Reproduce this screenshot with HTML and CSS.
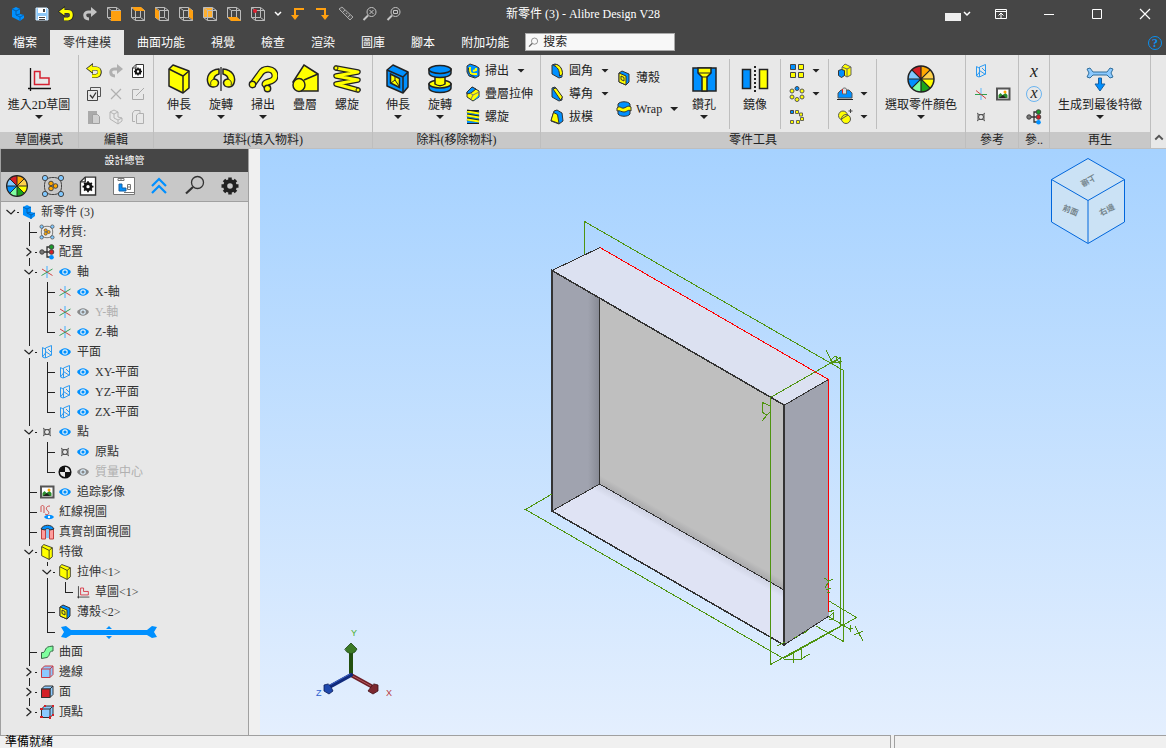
FILE: index.html
```html
<!DOCTYPE html>
<html lang="zh-TW">
<head>
    <meta charset="UTF-8">
    <meta name="viewport" content="width=device-width, initial-scale=1.0">
    <title>新零件 (3) - Alibre Design V28</title>
    <link rel="stylesheet" href="styles.css">
</head>
<body>
    <!-- icon sprite -->
    <svg class="sprite" aria-hidden="true">
        <symbol id="i-part" viewBox="0 0 16 16"><path d="M2 3l4-2 4 2v5l4 1v3l-4 3-8-4z" fill="#0090ff"/><path d="M2 3l4 2 4-2M6 5v4l4 2 4-2M10 11v4M6 9l4-1" fill="none" stroke="#0560b0"/></symbol>
        <symbol id="i-save" viewBox="0 0 16 16"><path d="M2 2h11l1 1v11H2z" fill="#8cc8f8" stroke="#d4ecff"/><path d="M4 2h8v5H4zM4 10h8v4H4z" fill="#fff"/><path d="M9 3h2v3H9zM5 11h6v1H5zM5 13h6v1H5z" fill="#444"/></symbol>
        <symbol id="i-undo" viewBox="0 0 16 16"><path d="M5 5.500h5c5 0 5 7 0 7.500H6" fill="none" stroke="#222" stroke-width="4"/><path d="M7 0L0 5.500 7 11z" fill="#222"/><path d="M4 5.500h6c4.500 0 4.500 7 0 7.500H6" fill="none" stroke="#ff0" stroke-width="2.800"/><path d="M6.500 1.500L1 5.500l5.500 4z" fill="#ff0"/></symbol>
        <symbol id="i-redo" viewBox="0 0 16 16"><path d="M12 6H6c-4.500 0-4.500 7 1 7" fill="none" stroke="currentColor" stroke-width="3"/><path d="M9 1l6 5-6 5z" fill="currentColor"/></symbol>
        <symbol id="i-wire" viewBox="0 0 16 16"><path d="M1.500 1.500h9l4 3v10h-9l-4-3zM1.500 1.500l4 3h9M5.500 4.500v10M10.500 1.500v10h-9M10.500 11.500l4 3" fill="none" stroke="#bbb"/></symbol>
        <symbol id="i-v1" viewBox="0 0 16 16"><use href="#i-wire"/><path d="M5 5h10v10H5z" fill="#ffa010"/></symbol>
        <symbol id="i-v2" viewBox="0 0 16 16"><use href="#i-wire"/><path d="M2 1h9l4 4H5z" fill="#ffa010"/></symbol>
        <symbol id="i-v3" viewBox="0 0 16 16"><use href="#i-wire"/><path d="M1 2l4 3v9l-4-3z" fill="#ffa010"/></symbol>
        <symbol id="i-v4" viewBox="0 0 16 16"><use href="#i-wire"/><path d="M11 2l4 3v9l-4-3z" fill="#ffa010"/></symbol>
        <symbol id="i-v5" viewBox="0 0 16 16"><path d="M2 2h9v9H2z" fill="#ffb030"/><use href="#i-wire"/></symbol>
        <symbol id="i-v6" viewBox="0 0 16 16"><use href="#i-wire"/><path d="M2 11h9l4 4H5z" fill="#ffa010"/></symbol>
        <symbol id="i-v7" viewBox="0 0 16 16"><use href="#i-wire"/><circle cx="5" cy="5" r="2" fill="#e02030"/></symbol>
        <symbol id="i-chev" viewBox="0 0 8 8"><path d="M1 2l3 3 3-3" fill="none" stroke="currentColor" stroke-width="1.500"/></symbol>
        <symbol id="i-turnl" viewBox="0 0 16 16"><path d="M14 3H5v7" fill="none" stroke="#ffa010" stroke-width="2"/><path d="M1 9h8l-4 5z" fill="#ffa010"/></symbol>
        <symbol id="i-turnr" viewBox="0 0 16 16"><path d="M2 3h9v7" fill="none" stroke="#ffa010" stroke-width="2"/><path d="M7 9h8l-4 5z" fill="#ffa010"/></symbol>
        <symbol id="i-ruler" viewBox="0 0 16 16"><path d="M1 3l3-2 11 10-3 3z" fill="#555" stroke="#aaa"/><path d="M5 6l2-2M8 8l1-1M10 11l2-2" stroke="#aaa"/></symbol>
        <symbol id="i-lens" viewBox="0 0 16 16"><circle cx="9.500" cy="6" r="4.500" fill="none" stroke="currentColor"/><path d="M6 9.500L1.500 14" stroke="currentColor" stroke-width="2"/></symbol>
        <symbol id="i-lensx" viewBox="0 0 16 16"><use href="#i-lens"/><path d="M7.500 4l4 4M11.500 4l-4 4" stroke="currentColor"/></symbol>
        <symbol id="i-lensb" viewBox="0 0 16 16"><use href="#i-lens"/><path d="M7.500 4.500h4v3h-4z" fill="none" stroke="currentColor"/></symbol>
        <symbol id="i-keyin" viewBox="0 0 16 16"><path d="M2.500 3.500h11v9h-11zM2.500 5.500h11M8 12V7.500M5.500 9.500L8 7l2.500 2.500" fill="none" stroke="#fff"/></symbol>
        <symbol id="i-min" viewBox="0 0 12 12"><path d="M1 6.500h10" stroke="#fff"/></symbol>
        <symbol id="i-max" viewBox="0 0 12 12"><path d="M1.500 1.500h9v9h-9z" fill="none" stroke="#fff"/></symbol>
        <symbol id="i-x" viewBox="0 0 12 12"><path d="M1 1l10 10M11 1L1 11" stroke="currentColor" stroke-width="1.200"/></symbol>
        <symbol id="i-docgear" viewBox="0 0 16 16"><path d="M6 1.500h7.500v13h-11V5z" fill="#fff" stroke="#333"/><path d="M2.500 5H6V1.500" fill="none" stroke="#333"/><circle cx="8" cy="8.500" r="2.200" fill="none" stroke="#111" stroke-width="2"/><path d="M8 4.500v2M8 10.500v2M4 8.500h2M10 8.500h2M5.200 5.700l1 1M9.800 10.300l1 1M10.800 5.700l-1 1M5.200 11.300l1-1" stroke="#111" stroke-width="1.300"/></symbol>
        <symbol id="i-checks" viewBox="0 0 16 16"><path d="M4.500 4V1.500h10v9H12" fill="none" stroke="#555"/><path d="M1.500 4.500h10v10h-10z" fill="#e8e8e8" stroke="#444"/><path d="M4 9l2.500 3L10 6.500" fill="none" stroke="#333" stroke-width="1.300"/></symbol>
        <symbol id="i-editbox" viewBox="0 0 16 16"><path d="M9 3.500H2.500v10h11V8M6 10l8-8" fill="none" stroke="#aaa"/></symbol>
        <symbol id="i-paste" viewBox="0 0 16 16"><path d="M2 2h9v13H2z" fill="#aaa"/><path d="M6.500 5.500h5l2 2v7h-7z" fill="#d0d0d0" stroke="#a0a0a0"/></symbol>
        <symbol id="i-partoff" viewBox="0 0 16 16"><path d="M2 3l4-2 4 2v5l4 1v3l-4 3-8-5zM2 3l4 2 4-2M6 5v4l4 2 4-2M10 11v4" fill="none" stroke="#b4b4b4"/></symbol>
        <symbol id="i-copy" viewBox="0 0 16 16"><path d="M5 12.500H2.500V4l2-2.500H10V4M6.500 6l2-1.500h5v10h-7z" fill="none" stroke="#b0b0b0"/></symbol>

        <symbol id="b-sketch" viewBox="0 0 30 30"><path d="M6.500 4v23M4 24.500h23" stroke="#111" stroke-width="1.300"/><path d="M10.500 7.500H16v6.500h9v6.500H10.500z" fill="none" stroke="#d42030" stroke-width="1.500"/></symbol>
        <symbol id="b-extrude" viewBox="0 0 30 30"><path d="M5 5l4-4 16 6v17l-6 5-14-7z" fill="#ff0" stroke="#222" stroke-width="1.500" stroke-linejoin="round"/><path d="M5 5l14 7 6-5M19 12v17" fill="none" stroke="#222" stroke-width="1.500"/></symbol>
        <symbol id="b-revolve" viewBox="0 0 30 30"><path d="M13 5C3 6 0 13 2 19c1 4 6 5 9 3 3-3 1-7-3-7 0-3 2-4 5-5zM17 5c10 1 13 8 11 14-1 4-6 5-9 3-3-3-1-7 3-7 0-3-2-4-5-5z" fill="#ff0" stroke="#222" stroke-width="1.500" stroke-linejoin="round"/><path d="M8 15c-3 1-4 4-3 6M22 15c3 1 4 4 3 6" fill="none" stroke="#222"/><path d="M15 3v24" stroke="#444" stroke-width="1.500"/></symbol>
        <symbol id="b-sweep" viewBox="0 0 30 30"><path d="M4 21l8-11c4-7 15-6 15 2 0 7-10 5-10 8l3 4" fill="none" stroke="#222" stroke-width="7"/><path d="M4 21l8-11c4-7 15-6 15 2 0 7-10 5-10 8l3 4" fill="none" stroke="#ff0" stroke-width="4.500"/><circle cx="4.500" cy="20.500" r="3.200" fill="#ff0" stroke="#222" stroke-width="1.400"/><circle cx="19.500" cy="24.500" r="3.200" fill="#ff0" stroke="#222" stroke-width="1.400"/></symbol>
        <symbol id="b-loft" viewBox="0 0 30 30"><path d="M3 18L14 1l14 9v17H9z" fill="#ff0" stroke="#222" stroke-width="1.500"/><path d="M14 16L28 10" stroke="#222" stroke-width="1.500"/><ellipse cx="9" cy="21" rx="6" ry="6.500" fill="#ff0" stroke="#222" stroke-width="1.500"/></symbol>
        <symbol id="b-helix" viewBox="0 0 30 30"><path d="M4 4l22 4L4 12l22 4-22 4 22 6" fill="none" stroke="#222" stroke-width="5.500" stroke-linejoin="round" stroke-linecap="round"/><path d="M4 4l22 4L4 12l22 4-22 4 22 6" fill="none" stroke="#ff0" stroke-width="3" stroke-linejoin="round" stroke-linecap="round"/><circle cx="4" cy="4" r="2" fill="#ff0" stroke="#222"/><circle cx="26" cy="26" r="2" fill="#ff0" stroke="#222"/></symbol>
        <symbol id="b-cutext" viewBox="0 0 30 30"><path d="M4 6l6-5 15 7v15l-5 6-16-7z" fill="#0090ff" stroke="#222" stroke-width="1.500" stroke-linejoin="round"/><path d="M4 6l16 7v16M20 13l5-5" fill="none" stroke="#222" stroke-width="1.500"/><path d="M7.500 10l9 4.500v9l-9-4.500z" fill="#ff0" stroke="#222" stroke-width="1.500"/><path d="M8 19l4-3 4 6M12 16v-4" fill="none" stroke="#222"/></symbol>
        <symbol id="b-cutrev" viewBox="0 0 30 30"><path d="M4 20v4c0 6 22 6 22 0v-4z" fill="#0090ff" stroke="#222" stroke-width="1.500"/><ellipse cx="15" cy="20" rx="11" ry="4" fill="#ff0" stroke="#222" stroke-width="1.500"/><path d="M10 10h10v10c-3 2-7 2-10 0z" fill="#ff0" stroke="#222" stroke-width="1.500"/><path d="M4 5v4c0 6 22 6 22 0V5z" fill="#0090ff" stroke="#222" stroke-width="1.500"/><ellipse cx="15" cy="5.500" rx="11" ry="4" fill="#0090ff" stroke="#222" stroke-width="1.500"/></symbol>
        <symbol id="b-hole" viewBox="0 0 30 30"><path d="M4 4h23v23H4z" fill="#0090ff" stroke="#222" stroke-width="1.500"/><path d="M9 4h13v5l-4 4v14h-5V13L9 9z" fill="#ff0" stroke="#222" stroke-width="1.500"/><path d="M9 9h13M13 13h5" stroke="#222"/></symbol>
        <symbol id="b-mirror" viewBox="0 0 30 30"><path d="M2.500 5.500h8v19h-8z" fill="#0090ff" stroke="#222" stroke-width="1.500"/><path d="M19.500 5.500h8v19h-8z" fill="#ff0" stroke="#222" stroke-width="1.500"/><path d="M15 2v26" stroke="#222" stroke-width="2" stroke-dasharray="2 2"/></symbol>
        <symbol id="b-wheel" viewBox="0 0 30 30"><path d="M15 15V2A13 13 0 0 1 24.200 5.800z" fill="#ffa800"/><path d="M15 15L24.200 5.800A13 13 0 0 1 28 15z" fill="#ffd24d"/><path d="M15 15H28A13 13 0 0 1 24.200 24.200z" fill="#ff0"/><path d="M15 15L24.200 24.200A13 13 0 0 1 15 28z" fill="#1aa51a"/><path d="M15 15V28A13 13 0 0 1 5.800 24.200z" fill="#7fff9f"/><path d="M15 15L5.800 24.200A13 13 0 0 1 2 15z" fill="#0090ff"/><path d="M15 15H2A13 13 0 0 1 5.800 5.800z" fill="#80c8ff"/><path d="M15 15L5.800 5.800A13 13 0 0 1 15 2z" fill="#d42027"/><path d="M15 2v26M2 15h26M5.800 5.800l18.400 18.400M24.200 5.800L5.800 24.200" stroke="#222" stroke-width="1.200"/><circle cx="15" cy="15" r="13" fill="none" stroke="#222" stroke-width="1.500"/></symbol>
        <symbol id="b-regen" viewBox="0 0 30 30"><path d="M2 5l3-1 3 4h14l3-4 3 1-2 4 2 4-3 1-3-3H8l-3 3-3-1 2-4z" fill="#8ccaff" stroke="#2f6e9c"/><path d="M13.500 14h3v6h3.500l-5 7-5-7h3.500z" fill="#0090ff" stroke="#1a60a0"/></symbol>

        <symbol id="s-cutsweep" viewBox="0 0 16 16"><path d="M2 3l3-2 6 2 3 2v8l-4 2-6-2-2-4z" fill="#0090ff" stroke="#333"/><path d="M5 4c-1 8 2 7 7 7M8 8l3-1V5" fill="none" stroke="#ff0" stroke-width="2"/><path d="M3.500 5c0 7 2 7 6 8.500" fill="none" stroke="#333"/></symbol>
        <symbol id="s-cutloft" viewBox="0 0 16 16"><path d="M2 6l5-5 7 4v6l-6 4-6-4z" fill="#ff0" stroke="#333"/><path d="M2 6l5-5 4 2-5 4-4 1z" fill="#0090ff" stroke="#333"/><path d="M6 13l2-4 6-3M8 9L5 7" fill="none" stroke="#777"/><path d="M8 15l6-4V9z" fill="#0090ff"/></symbol>
        <symbol id="s-cuthelix" viewBox="0 0 16 16"><path d="M2 2h12v12H2z" fill="#0090ff"/><path d="M2 2l12 2M2 6l12 2M2 10l12 2" stroke="#222" stroke-width="3"/><path d="M2 2.500l12 2M2 6.500l12 2M2 10.500l12 2" stroke="#ff0" stroke-width="1.800"/><path d="M2 14.500h12M2 1.500h12" stroke="#222"/></symbol>
        <symbol id="s-fillet" viewBox="0 0 16 16"><path d="M3 2l3-1c5 1 7 5 7 9v4l-3 1-7-4z" fill="#0090ff" stroke="#333"/><path d="M4.500 2.500l3-1c4 1 6 5 6 10l-3 1.500c0-6-2-9-6-10.500z" fill="#ff0" stroke="#333"/></symbol>
        <symbol id="s-chamfer" viewBox="0 0 16 16"><path d="M3 2l3-1 7 10v3l-3 1-7-4z" fill="#0090ff" stroke="#333"/><path d="M4 3l3-1 6.500 9-2 3z" fill="#ff0" stroke="#333"/></symbol>
        <symbol id="s-draft" viewBox="0 0 16 16"><path d="M5 2l3-1 5 3 1 8-4 3-8-3z" fill="#0090ff" stroke="#333"/><path d="M4.500 3.500l4 2 1.500 9-8-3z" fill="#ff0" stroke="#333"/></symbol>
        <symbol id="s-shell" viewBox="0 0 16 16"><path d="M3 3l3-2 7 3v8l-3 3-7-3z" fill="#0090ff" stroke="#333"/><path d="M3 3l7 3v9l-7-3z" fill="#ff0" stroke="#333"/><path d="M5 6l3 1.500V11L5 9.500z" fill="#ff0" stroke="#333"/></symbol>
        <symbol id="s-wrap" viewBox="0 0 16 16"><path d="M2 3c2-3 10-3 12 0v10c-2 3-10 3-12 0z" fill="#0090ff" stroke="#333"/><path d="M1 7c3-3 4 1 7 0s4-3 7-1v4c-3-2-4 1-7 1s-4-2-7-1z" fill="#ff0" stroke="#333"/></symbol>
        <symbol id="s-pat1" viewBox="0 0 16 16"><path d="M1.500 1.500h5v5h-5z" fill="#0090ff" stroke="#444"/><path d="M9.500 1.500h5v5h-5zM1.500 9.500h5v5h-5zM9.500 9.500h5v5h-5z" fill="#ff0" stroke="#444"/></symbol>
        <symbol id="s-pat2" viewBox="0 0 16 16"><g fill="#ff0" stroke="#555"><circle cx="3" cy="5" r="2"/><circle cx="13" cy="5" r="2"/><circle cx="3" cy="11" r="2"/><circle cx="13" cy="11" r="2"/><circle cx="8" cy="13.500" r="2"/></g><circle cx="8" cy="2.500" r="2" fill="#0090ff" stroke="#444"/></symbol>
        <symbol id="s-pat3" viewBox="0 0 16 16"><path d="M1.500 1.500h3v3h-3z" fill="#0090ff" stroke="#444"/><path d="M6.500 1.500h3v3h-3zM10.500 4h3v3h-3zM11.500 8.500h3v3h-3zM7.500 11.500h3v3h-3zM1.500 11.500h3v3h-3z" fill="#ff0" stroke="#665"/></symbol>
        <symbol id="s-boss" viewBox="0 0 16 16"><path d="M5 4l3-3 6 3v8l-4 2-5-3z" fill="#ff0" stroke="#666"/><path d="M5 4l5 2v8M10 6l4-2" fill="none" stroke="#666"/><path d="M1.500 7.500l3-1 3 1v5l-3 2-3-2z" fill="#0090ff" stroke="#333"/></symbol>
        <symbol id="s-flat" viewBox="0 0 16 16"><path d="M1 7l3-3h8l3 3v5H1z" fill="#0090ff" stroke="#555"/><path d="M5.500 8V3.500c0-2 4-2 4 0V8z" fill="#ddd" stroke="#666"/><path d="M5 3h1v4H5z" fill="#d22"/><path d="M0 13.500h16" stroke="#222"/></symbol>
        <symbol id="s-bool" viewBox="0 0 16 16"><circle cx="6" cy="6.500" r="4.500" fill="#ff0" stroke="#555"/><circle cx="9" cy="10" r="4.500" fill="#ff0" stroke="#555"/><path d="M4.500 10L11 6" stroke="#555"/><path d="M13.500 0v4M11.500 2h4" stroke="#444"/></symbol>
        <symbol id="s-plane" viewBox="0 0 16 16"><path d="M6.500 4l6-2.500v9.500l-6 3zM6 5L3.500 3.500v9.500L6 14M9 5l3 3M6.500 7.500l6 4M3.500 13l3-4" fill="none" stroke="#2d9af0"/></symbol>
        <symbol id="s-axis" viewBox="0 0 16 16"><path d="M8 2v12" stroke="#8cc8f4" stroke-width="1.800"/><path d="M3 5l10.500 6.500" stroke="#d04848"/><path d="M2.500 11.500L13.500 5" stroke="#38a058"/></symbol>
        <symbol id="s-axisb" viewBox="0 0 16 16"><path d="M8 2v12" stroke="#8cc8f4" stroke-width="1.500"/><path d="M2 8.500h12" stroke="#30a050"/><path d="M3 4.500l10 8" stroke="#d04040"/></symbol>
        <symbol id="s-image" viewBox="0 0 16 16"><path d="M2 2.500h12.500v11H2z" fill="#fff" stroke="#555" stroke-width="2"/><path d="M3.500 12V9l2-2 2 2 3-2 2 2v3z" fill="#2c8c2c"/><path d="M4 12l4-3 3 3z" fill="#222"/><circle cx="10" cy="6" r="1.500" fill="#ffa800"/></symbol>
        <symbol id="s-point" viewBox="0 0 16 16"><circle cx="8" cy="8" r="2.500" fill="none" stroke="#444"/><path d="M4 4l2 1.500h4L12 4M4 12l2-1.500h4l2 1.500M5 5v6M11 5v6" fill="none" stroke="#555"/></symbol>
        <symbol id="s-config" viewBox="0 0 16 16"><path d="M4 8h6M11 3H8v10h3" fill="none" stroke="#333" stroke-width="1.300"/><circle cx="3" cy="8" r="2.200" fill="#777" stroke="#444"/><circle cx="12.500" cy="3" r="2.300" fill="#1a9a2a" stroke="#444"/><circle cx="12.500" cy="8" r="2.300" fill="#d42027" stroke="#444"/><circle cx="12.500" cy="13.200" r="2.300" fill="#0090ff"/></symbol>
        <symbol id="s-eye" viewBox="0 0 16 16"><path d="M2 8c3-5 9-5 12 0-3 5-9 5-12 0z" fill="currentColor"/><circle cx="8" cy="8" r="2.800" fill="#d8ecfa"/><circle cx="8" cy="8" r="1.600" fill="currentColor"/></symbol>
        <symbol id="s-material" viewBox="0 0 24 24"><rect x="3.500" y="3.500" width="17" height="17" rx="7" fill="none" stroke="#444"/><g fill="#80c8ff" stroke="#444"><circle cx="4" cy="4" r="2.600"/><circle cx="20" cy="4" r="2.600"/><circle cx="4" cy="20" r="2.600"/><circle cx="20" cy="20" r="2.600"/></g><g fill="#ffa800" stroke="#444"><circle cx="10" cy="9.500" r="2.300"/><circle cx="10" cy="14.500" r="2.300"/><circle cx="14.500" cy="12" r="2.300"/></g></symbol>
        <symbol id="s-mass" viewBox="0 0 16 16"><circle cx="8" cy="8" r="5.800" fill="#e8e8e8" stroke="#111" stroke-width="1.500"/><path d="M8 8V2A6 6 0 0 0 2 8zM8 8v6A6 6 0 0 0 14 8z" fill="#111"/></symbol>
        <symbol id="s-redline" viewBox="0 0 16 16"><path d="M2 8V3c0-2 3-2 3 0v6M11 2C6 2 7 6 9 7c2 2 0 5-3 3" fill="none" stroke="#d05050"/><path d="M5 13c2-3 8-3 10 0-2 3-8 3-10 0z" fill="#0090ff"/><circle cx="10" cy="13" r="1.200" fill="#fff"/></symbol>
        <symbol id="s-section" viewBox="0 0 16 16"><path d="M2.500 5h4v10h-4zM10.500 5h4v10h-4z" fill="#ff9d9d" stroke="#c04040"/><path d="M7 5h3v9H7z" fill="#8cc4f4"/><path d="M2 5c2-5 11-5 13 0l-4 1c-1-2-4-2-5 0z" fill="#0090ff" stroke="#333"/></symbol>
        <symbol id="s-surface" viewBox="0 0 16 16"><path d="M2.500 8.500c5 1 2-5 8-6l3.500-.5v5c-5 0-2 4-6 6.500l-5.500 1z" fill="#7fff9f" stroke="#386848"/></symbol>
        <symbol id="s-cube" viewBox="0 0 16 16"><path d="M2.500 5l3-3H14v8.500l-3 3H2.500z" fill="#8ccaff" stroke="currentColor"/><path d="M2.500 5H11v8.500M11 5l3-3" fill="none" stroke="currentColor"/></symbol>
        <symbol id="s-face" viewBox="0 0 16 16"><use href="#s-cube"/><path d="M2.500 5H11v8.500H2.500z" fill="#d42027" stroke="#333"/></symbol>
        <symbol id="s-vertex" viewBox="0 0 16 16"><use href="#s-cube"/><path d="M1 4h3v2H1zM5 1h2v2H5zM13 1h2v2h-2zM1 12h3v2H1zM10 12h2v3h-2zM13 10h2v2h-2z" fill="#d42027"/></symbol>
        <symbol id="p-window" viewBox="0 0 24 24"><path d="M1.500 3.500h21v17h-21z" fill="#fff" stroke="#777"/><path d="M7 10h3v4h4v3H7z" fill="#0090ff" stroke="#1a60a0"/><path d="M6 4.500h6v2H6zM9 4v3M15.500 10.500h3v5h-3zM15.500 13h3M12 18.500h10" fill="none" stroke="#777"/></symbol>
        <symbol id="p-up" viewBox="0 0 24 24"><path d="M5 12l7-7 7 7M5 19l7-7 7 7" fill="none" stroke="#0090ff" stroke-width="2.200"/></symbol>
        <symbol id="p-lens" viewBox="0 0 24 24"><circle cx="14.500" cy="8.500" r="6" fill="none" stroke="#333" stroke-width="1.300"/><path d="M10 13L3 19.500" stroke="#333" stroke-width="2.200"/></symbol>
        <symbol id="p-gear" viewBox="0 0 24 24"><circle cx="12" cy="12" r="4.800" fill="none" stroke="#222" stroke-width="4"/><path d="M12 3.500v3M12 17.500v3M3.500 12h3M17.500 12h3M6 6l2 2M16 16l2 2M18 6l-2 2M6 18l2-2" stroke="#222" stroke-width="3.500"/></symbol>
        <symbol id="t-down" viewBox="0 0 17 12"><path d="M4.500 4L9 8l4-4M15 6.500h2" fill="none" stroke="#222" stroke-width="1.200"/></symbol>
        <symbol id="t-right" viewBox="0 0 17 12"><path d="M6.500 2l4.500 4-4.500 4M15 6.500h2" fill="none" stroke="#222" stroke-width="1.200"/></symbol>
    </svg>

    <header class="title-bar">
        <div class="quick-access">
            <button aria-label="零件"><svg><use href="#i-part"/></svg></button>
            <button aria-label="儲存"><svg><use href="#i-save"/></svg></button>
            <button aria-label="復原"><svg><use href="#i-undo"/></svg></button>
            <button aria-label="重做"><svg><use href="#i-redo"/></svg></button>
            <button aria-label="前視"><svg><use href="#i-v1"/></svg></button>
            <button aria-label="上視"><svg><use href="#i-v2"/></svg></button>
            <button aria-label="左視"><svg><use href="#i-v3"/></svg></button>
            <button aria-label="右視"><svg><use href="#i-v4"/></svg></button>
            <button aria-label="後視"><svg><use href="#i-v5"/></svg></button>
            <button aria-label="下視"><svg><use href="#i-v6"/></svg></button>
            <button aria-label="等角視"><svg><use href="#i-v7"/></svg></button>
            <button class="narrow" aria-label="更多視圖"><svg><use href="#i-chev"/></svg></button>
            <button aria-label="向左"><svg><use href="#i-turnl"/></svg></button>
            <button aria-label="向右"><svg><use href="#i-turnr"/></svg></button>
            <button aria-label="量測"><svg><use href="#i-ruler"/></svg></button>
            <button aria-label="全部縮放"><svg><use href="#i-lensx"/></svg></button>
            <button aria-label="視窗縮放"><svg><use href="#i-lensb"/></svg></button>
        </div>
        <h1>新零件 (3) - Alibre Design V28</h1>
        <div class="window-buttons">
            <button class="style-btn" aria-label="樣式"><span class="swatch"></span><svg><use href="#i-chev"/></svg></button>
            <button aria-label="功能區顯示"><svg class="keyin"><use href="#i-keyin"/></svg></button>
            <button aria-label="最小化"><svg><use href="#i-min"/></svg></button>
            <button aria-label="最大化"><svg><use href="#i-max"/></svg></button>
            <button aria-label="關閉"><svg><use href="#i-x"/></svg></button>
        </div>
    </header>

    <nav class="tabs">
        <button>檔案</button>
        <button class="active">零件建模</button>
        <button>曲面功能</button>
        <button>視覺</button>
        <button>檢查</button>
        <button>渲染</button>
        <button>圖庫</button>
        <button>腳本</button>
        <button>附加功能</button>
        <label class="search">
            <svg><use href="#i-lens"/></svg>
            <input type="text" placeholder="搜索" aria-label="搜索">
        </label>
        <button class="help" aria-label="說明"><span>?</span></button>
    </nav>

    <section class="ribbon">
        <div class="group">
            <div class="group-body">
                <button class="big w70"><svg><use href="#b-sketch"/></svg><span>進入2D草圖</span><i class="arrow"></i></button>
            </div>
            <div class="group-name">草圖模式</div>
        </div>
        <div class="group">
            <div class="group-body">
                <div class="icon-col">
                    <button aria-label="復原"><svg><use href="#i-undo"/></svg></button>
                    <button aria-label="全選"><svg><use href="#i-checks"/></svg></button>
                    <button aria-label="貼上" disabled><svg><use href="#i-paste"/></svg></button>
                </div>
                <div class="icon-col off">
                    <button aria-label="重做" disabled><svg><use href="#i-redo"/></svg></button>
                    <button aria-label="刪除" disabled><svg class="delete"><use href="#i-x"/></svg></button>
                    <button aria-label="零件" disabled><svg><use href="#i-partoff"/></svg></button>
                </div>
                <div class="icon-col">
                    <button aria-label="設定"><svg><use href="#i-docgear"/></svg></button>
                    <button aria-label="編輯" disabled><svg><use href="#i-editbox"/></svg></button>
                    <button aria-label="複製" disabled><svg><use href="#i-copy"/></svg></button>
                </div>
            </div>
            <div class="group-name">編輯</div>
        </div>
        <div class="group">
            <div class="group-body">
                <button class="big"><svg><use href="#b-extrude"/></svg><span>伸長</span><i class="arrow"></i></button>
                <button class="big"><svg><use href="#b-revolve"/></svg><span>旋轉</span><i class="arrow"></i></button>
                <button class="big"><svg><use href="#b-sweep"/></svg><span>掃出</span><i class="arrow"></i></button>
                <button class="big"><svg><use href="#b-loft"/></svg><span>疊層</span></button>
                <button class="big"><svg><use href="#b-helix"/></svg><span>螺旋</span></button>
            </div>
            <div class="group-name">填料(填入物料)</div>
        </div>
        <div class="group">
            <div class="group-body">
                <button class="big"><svg><use href="#b-cutext"/></svg><span>伸長</span><i class="arrow"></i></button>
                <button class="big"><svg><use href="#b-cutrev"/></svg><span>旋轉</span><i class="arrow"></i></button>
                <div class="small-col w75">
                    <button><svg><use href="#s-cutsweep"/></svg>掃出<i class="arrow"></i></button>
                    <button><svg><use href="#s-cutloft"/></svg>疊層拉伸</button>
                    <button><svg><use href="#s-cuthelix"/></svg>螺旋</button>
                </div>
            </div>
            <div class="group-name">除料(移除物料)</div>
        </div>
        <div class="group">
            <div class="group-body">
                <div class="small-col w67">
                    <button><svg><use href="#s-fillet"/></svg>圓角<i class="arrow"></i></button>
                    <button><svg><use href="#s-chamfer"/></svg>導角<i class="arrow"></i></button>
                    <button><svg><use href="#s-draft"/></svg>拔模</button>
                </div>
                <div class="small-col two w71">
                    <button><svg><use href="#s-shell"/></svg>薄殼</button>
                    <button><svg><use href="#s-wrap"/></svg>Wrap<i class="arrow"></i></button>
                </div>
                <button class="big"><svg><use href="#b-hole"/></svg><span>鑽孔</span><i class="arrow"></i></button>
                <div class="sep"></div>
                <button class="big"><svg><use href="#b-mirror"/></svg><span>鏡像</span></button>
                <div class="sep"></div>
                <div class="small-col w39">
                    <button aria-label="線性陣列"><svg><use href="#s-pat1"/></svg><i class="arrow"></i></button>
                    <button aria-label="環形陣列"><svg><use href="#s-pat2"/></svg><i class="arrow"></i></button>
                    <button aria-label="路徑陣列"><svg><use href="#s-pat3"/></svg></button>
                </div>
                <div class="sep"></div>
                <div class="small-col w39">
                    <button aria-label="凸台"><svg><use href="#s-boss"/></svg></button>
                    <button aria-label="直接編輯"><svg><use href="#s-flat"/></svg><i class="arrow"></i></button>
                    <button aria-label="布林"><svg><use href="#s-bool"/></svg><i class="arrow"></i></button>
                </div>
                <div class="sep"></div>
                <button class="big w80"><svg><use href="#b-wheel"/></svg><span>選取零件顏色</span><i class="arrow"></i></button>
            </div>
            <div class="group-name">零件工具</div>
        </div>
        <div class="group">
            <div class="group-body">
                <div class="icon-col">
                    <button aria-label="平面"><svg><use href="#s-plane"/></svg></button>
                    <button aria-label="軸"><svg><use href="#s-axisb"/></svg></button>
                    <button aria-label="點"><svg><use href="#s-point"/></svg></button>
                </div>
                <div class="icon-col middle">
                    <button aria-label="追踪影像"><svg><use href="#s-image"/></svg></button>
                </div>
            </div>
            <div class="group-name">參考</div>
        </div>
        <div class="group">
            <div class="group-body">
                <div class="icon-col">
                    <button class="var">x</button>
                    <button class="var ring"><span>x</span></button>
                    <button aria-label="配置"><svg><use href="#s-config"/></svg></button>
                </div>
            </div>
            <div class="group-name">參..</div>
        </div>
        <div class="group">
            <div class="group-body">
                <button class="big w92"><svg><use href="#b-regen"/></svg><span>生成到最後特徵</span><i class="arrow"></i></button>
            </div>
            <div class="group-name">再生</div>
        </div>
        <button class="collapse" aria-label="收合"><svg><use href="#i-chev"/></svg></button>
    </section>

    <main class="workspace">
        <aside class="explorer">
            <h2>設計總管</h2>
            <div class="explorer-tools">
                <button aria-label="顏色"><svg><use href="#b-wheel"/></svg></button>
                <button aria-label="材質"><svg><use href="#s-material"/></svg></button>
                <button aria-label="屬性"><svg><use href="#i-docgear"/></svg></button>
                <button aria-label="視窗"><svg><use href="#p-window"/></svg></button>
                <button aria-label="全部收合"><svg><use href="#p-up"/></svg></button>
                <button aria-label="尋找"><svg><use href="#p-lens"/></svg></button>
                <button aria-label="設定"><svg><use href="#p-gear"/></svg></button>
            </div>
            <ul class="tree">
                <li>
                    <div class="row"><button class="toggle" aria-label="收合"><svg><use href="#t-down"/></svg></button><svg><use href="#i-part"/></svg><span>新零件 (3)</span></div>
                    <ul>
                        <li><div class="row"><i class="stub"></i><svg><use href="#s-material"/></svg><span>材質:</span></div></li>
                        <li><div class="row"><button class="toggle" aria-label="展開"><svg><use href="#t-right"/></svg></button><svg><use href="#s-config"/></svg><span>配置</span></div></li>
                        <li>
                            <div class="row"><button class="toggle" aria-label="收合"><svg><use href="#t-down"/></svg></button><svg><use href="#s-axis"/></svg><svg class="eye"><use href="#s-eye"/></svg><span>軸</span></div>
                            <ul>
                                <li><div class="row"><i class="stub"></i><svg><use href="#s-axis"/></svg><svg class="eye"><use href="#s-eye"/></svg><span>X-軸</span></div></li>
                                <li><div class="row hidden"><i class="stub"></i><svg><use href="#s-axis"/></svg><svg class="eye"><use href="#s-eye"/></svg><span>Y-軸</span></div></li>
                                <li><div class="row"><i class="stub"></i><svg><use href="#s-axis"/></svg><svg class="eye"><use href="#s-eye"/></svg><span>Z-軸</span></div></li>
                            </ul>
                        </li>
                        <li>
                            <div class="row"><button class="toggle" aria-label="收合"><svg><use href="#t-down"/></svg></button><svg><use href="#s-plane"/></svg><svg class="eye"><use href="#s-eye"/></svg><span>平面</span></div>
                            <ul>
                                <li><div class="row"><i class="stub"></i><svg><use href="#s-plane"/></svg><svg class="eye"><use href="#s-eye"/></svg><span>XY-平面</span></div></li>
                                <li><div class="row"><i class="stub"></i><svg><use href="#s-plane"/></svg><svg class="eye"><use href="#s-eye"/></svg><span>YZ-平面</span></div></li>
                                <li><div class="row"><i class="stub"></i><svg><use href="#s-plane"/></svg><svg class="eye"><use href="#s-eye"/></svg><span>ZX-平面</span></div></li>
                            </ul>
                        </li>
                        <li>
                            <div class="row"><button class="toggle" aria-label="收合"><svg><use href="#t-down"/></svg></button><svg><use href="#s-point"/></svg><svg class="eye"><use href="#s-eye"/></svg><span>點</span></div>
                            <ul>
                                <li><div class="row"><i class="stub"></i><svg><use href="#s-point"/></svg><svg class="eye"><use href="#s-eye"/></svg><span>原點</span></div></li>
                                <li><div class="row hidden"><i class="stub"></i><svg><use href="#s-mass"/></svg><svg class="eye"><use href="#s-eye"/></svg><span>質量中心</span></div></li>
                            </ul>
                        </li>
                        <li><div class="row"><i class="stub"></i><svg><use href="#s-image"/></svg><svg class="eye"><use href="#s-eye"/></svg><span>追踪影像</span></div></li>
                        <li><div class="row"><i class="stub"></i><svg><use href="#s-redline"/></svg><span>紅線視圖</span></div></li>
                        <li><div class="row"><i class="stub"></i><svg><use href="#s-section"/></svg><span>真實剖面視圖</span></div></li>
                        <li>
                            <div class="row"><button class="toggle" aria-label="收合"><svg><use href="#t-down"/></svg></button><svg><use href="#b-extrude"/></svg><span>特徵</span></div>
                            <ul>
                                <li>
                                    <div class="row"><button class="toggle" aria-label="收合"><svg><use href="#t-down"/></svg></button><svg><use href="#b-extrude"/></svg><span>拉伸&lt;1&gt;</span></div>
                                    <ul>
                                        <li><div class="row"><i class="stub"></i><svg><use href="#b-sketch"/></svg><span>草圖&lt;1&gt;</span></div></li>
                                    </ul>
                                </li>
                                <li><div class="row"><i class="stub"></i><svg><use href="#s-shell"/></svg><span>薄殼&lt;2&gt;</span></div></li>
                                <li><div class="row"><i class="stub"></i><svg class="rollback" viewBox="0 0 100 14"><path d="M4 2l5-1 5 4h76l5-4 5 1-3 5 3 5-5 1-5-3H14l-5 3-5-1 3-5z" fill="#0090ff"/><path d="M49 4l3-3 3 3zM49 11l3 3 3-3z" fill="#0090ff"/></svg></div></li>
                            </ul>
                        </li>
                        <li><div class="row"><i class="stub"></i><svg><use href="#s-surface"/></svg><span>曲面</span></div></li>
                        <li><div class="row"><button class="toggle" aria-label="展開"><svg><use href="#t-right"/></svg></button><svg class="edge"><use href="#s-cube"/></svg><span>邊線</span></div></li>
                        <li><div class="row"><button class="toggle" aria-label="展開"><svg><use href="#t-right"/></svg></button><svg><use href="#s-face"/></svg><span>面</span></div></li>
                        <li><div class="row"><button class="toggle" aria-label="展開"><svg><use href="#t-right"/></svg></button><svg><use href="#s-vertex"/></svg><span>頂點</span></div></li>
                    </ul>
                </li>
            </ul>
        </aside>

        <section class="viewport">
            <svg class="scene" viewBox="260 150 906 585">
                <defs>
                    <linearGradient id="wall" x1="0" x2="1" y1="0" y2="0"><stop offset="0" stop-color="#a0a3af"/><stop offset=".75" stop-color="#a0a3af"/><stop offset="1" stop-color="#858893"/></linearGradient>
                    <linearGradient id="back" gradientUnits="userSpaceOnUse" x1="692" y1="537" x2="696" y2="530"><stop offset="0" stop-color="#aaaaac"/><stop offset="1" stop-color="#bfbfbf"/></linearGradient>
                    <linearGradient id="floor" gradientUnits="userSpaceOnUse" x1="692" y1="537" x2="688" y2="544"><stop offset="0" stop-color="#ced2e2"/><stop offset="1" stop-color="#dfe3f4"/></linearGradient>
                </defs>
                <!-- shelled box -->
                <g>
                    <path d="M552 270L600 247 829 379 784 405z" fill="#dce1f1"/>
                    <path d="M784 405L829 379V616L784 645z" fill="#a0a3af"/>
                    <path d="M552 271L600 298V484L552 511z" fill="url(#wall)"/>
                    <path d="M600 298L784 404V590L600 484z" fill="url(#back)"/>
                    <path d="M552 511L600 484 784 590V645z" fill="url(#floor)"/>
                </g>
                <g fill="none" stroke="#333" shape-rendering="crispEdges">
                    <path d="M600 247.500L552 270.500M784.500 405L828.500 379.500M599.500 298V484L552 511M599.500 484L784 590M784 645L829 616"/>
                    <path d="M552 270.500L784 405V645L552 511z" stroke-width="1.500"/>
                    <path d="M552 270V511M784 405V645" stroke-width="2"/>
                    <path d="M600 247.500L828.500 379.500V612" stroke="#f00"/>
                </g>
                <!-- reference planes and their labels -->
                <g fill="none" stroke="#4f9410" shape-rendering="crispEdges">
                    <path d="M584.500 254V221.500L843.500 370.500V641.500L816 626"/>
                    <path d="M840.500 357V626L770.500 664.500V397.500L840.500 357.500"/>
                    <path d="M552 494L525.500 509.500 783.500 658.500 856.500 617.500 829 601"/>
                    <path d="M770 406L762.500 402.500V412.500L767 415 770 412M767 415L762 421"/>
                    <path d="M826 350L832 362M829 364L842 361M830 361L835 356 840 359M836 357L841 366M832 364L837 360"/>
                    <path d="M824 578L829 581 833 579M829 581L825 588M826 590L831 588M827 592L830 592"/>
                    <path d="M829 612L834 610M829 617L833 613V620M829 620L834 618"/>
                    <path d="M777 646L785 642M794 638L798 636M803 634L808 630M829 617L843 625 851 630"/>
                    <path d="M784 659.500H801.500V648M793.500 652V663M801 659L810 654"/>
                    <path d="M850.500 625V632M848 628L853 628M855 626L863 641M854 635L863 631"/>
                </g>
                <!-- origin triad -->
                <g stroke-linecap="round">
                    <path d="M351 675V652" stroke="#22500f" stroke-width="4"/>
                    <path d="M345 649l6-6 6 6-2 3-4 2-4-2z" fill="#3b7a26" stroke="#1c4410" stroke-width=".8"/>
                    <path d="M351 675l20 11" stroke="#6e1e26" stroke-width="4"/>
                    <path d="M351 675l20 11" stroke="#b45a60"/>
                    <path d="M374 684l4 1v6l-5 3-5-3 3-4z" fill="#7b2830" stroke="#431016" stroke-width=".8"/>
                    <path d="M351 675l-20 11" stroke="#102a7c" stroke-width="4"/>
                    <path d="M350 674l-20 11" stroke="#3c62c4"/>
                    <path d="M328 684l-4 1v6l5 3 4-3-2-4z" fill="#1f49ad" stroke="#0b1c58" stroke-width=".8"/>
                </g>
                <g class="axis-names">
                    <text x="351" y="636" fill="#4caf30">Y</text>
                    <text x="386" y="696" fill="#b83a42">X</text>
                    <text x="316" y="696" fill="#2f5fd0">Z</text>
                </g>
            </svg>
            <svg class="view-cube" viewBox="0 0 76 88">
                <path d="M1.500 22.500L38 1.500 74.500 22.500V65L38 86.500 1.500 65z" fill="#cbe2f5" stroke="#0066dc"/>
                <path d="M1.500 22.500L38 43.500 74.500 22.500M38 43.500V86" fill="none" stroke="#0066dc"/>
                <text transform="translate(44 17) rotate(150)">上邊</text>
                <text transform="translate(12 53) rotate(22)">前面</text>
                <text transform="translate(51 59) rotate(-27)">右邊</text>
            </svg>
        </section>
    </main>

    <footer class="status-bar">
        <div class="message">準備就緒</div>
        <div class="pane"></div>
    </footer>
</body>
</html>
```
FILE: styles.css
```css
* {
    margin: 0;
    padding: 0;
    box-sizing: border-box;
}

body {
    display: flex;
    flex-direction: column;
    height: 100vh;
    overflow: hidden;
    font-family: "Liberation Serif", "Noto Sans CJK TC", serif;
    font-size: 12px;
    line-height: 16px;
    color: #222;
    background-color: #f0f0f0;
}

button {
    font: inherit;
    color: inherit;
    background: none;
    border: none;
    white-space: nowrap;
}

svg {
    display: block;
    flex: none;
    width: 16px;
    height: 16px;
}

.sprite {
    position: absolute;
    width: 0;
    height: 0;
}

.arrow {
    flex: none;
    width: 8px;
    height: 4px;
    background-color: #222;
    clip-path: polygon(0 0, 100% 0, 50% 100%);
}

/* title bar */
.title-bar {
    display: grid;
    grid-template-columns: 1fr auto 1fr;
    height: 30px;
    padding-bottom: 2px;
    color: #fff;
    background-color: #464646;
}

.title-bar h1 {
    align-self: center;
    font-size: 12px;
    font-weight: normal;
}

.quick-access {
    display: flex;
    padding-left: 6px;
}

.quick-access button {
    display: flex;
    align-items: center;
    justify-content: center;
    width: 24px;
    color: #c4c4c4;
}

.quick-access .narrow {
    width: 16px;
    color: #fff;
}

.quick-access .narrow svg {
    width: 8px;
    height: 8px;
}

.window-buttons {
    display: flex;
    justify-content: flex-end;
    gap: 6px;
}

.window-buttons button {
    display: flex;
    align-items: center;
    justify-content: center;
    width: 42px;
}

.window-buttons svg {
    width: 12px;
    height: 12px;
}

.window-buttons .keyin {
    width: 16px;
    height: 16px;
}

.window-buttons .style-btn {
    gap: 2px;
    width: 32px;
}

.window-buttons .style-btn svg {
    width: 8px;
    height: 8px;
}

.swatch {
    width: 16px;
    height: 8px;
    margin-top: 6px;
    background-color: #eee;
}

/* tabs */
.tabs {
    display: flex;
    height: 25px;
    color: #fff;
    background-color: #464646;
}

.tabs button {
    padding: 0 13px;
}

.tabs .active {
    color: #333;
    background-color: #e8e8e8;
}

.search {
    display: flex;
    align-items: center;
    width: 150px;
    height: 18px;
    margin: 3px;
    padding: 0 2px;
    gap: 4px;
    color: #666;
    background-color: #f8f8f8;
    border: 1px solid #aaa;
}

.search svg {
    width: 11px;
    height: 11px;
}

.search input {
    flex: 1;
    min-width: 0;
    height: 16px;
    font: inherit;
    background: none;
    border: none;
    outline: none;
}

.search input::placeholder {
    color: #222;
    opacity: 1;
}

.tabs .help {
    margin-left: auto;
    padding: 0 4px;
}

.help span {
    display: block;
    width: 14px;
    height: 14px;
    border: 1px solid #0a90f0;
    border-radius: 50%;
    line-height: 12px;
    font-weight: bold;
    color: #0a90f0;
}

/* ribbon */
.ribbon {
    display: flex;
    height: 94px;
    background-color: #e8e8e8;
    border-bottom: 1px solid #bebebe;
}

.group {
    display: flex;
    flex-direction: column;
    border-right: 1px solid #bebebe;
}

.group-body {
    display: flex;
    height: 77px;
    padding: 4px 4px 0;
}

.group-name {
    height: 16px;
    line-height: 17px;
    text-align: center;
    background-color: #c8c8c8;
}

.big {
    display: flex;
    flex-direction: column;
    align-items: center;
    width: 42px;
    padding-top: 5px;
}

.big svg {
    width: 30px;
    height: 30px;
}

.big span {
    margin-top: 3px;
}

.big .arrow {
    margin-top: 2px;
}

.w39 {
    width: 39px;
}

.w67 {
    width: 67px;
}

.w70 {
    width: 70px;
}

.w71 {
    width: 71px;
}

.w75 {
    width: 75px;
}

.w80 {
    width: 80px;
}

.w92 {
    width: 92px;
}

.icon-col {
    display: flex;
    flex-direction: column;
    width: 22px;
}

.icon-col button {
    display: flex;
    align-items: center;
    justify-content: center;
    height: 23px;
}

.icon-col .delete {
    width: 12px;
    height: 12px;
}

.icon-col.off {
    color: #b0b0b0;
}

.icon-col.middle {
    padding-top: 23px;
}

.icon-col .var {
    font-size: 18px;
    font-style: italic;
}

.ring span {
    width: 16px;
    height: 16px;
    font-size: 16px;
    line-height: 11px;
    border: 1px solid #6ab4f0;
    border-radius: 50%;
}

.small-col {
    display: flex;
    flex-direction: column;
    height: 69px;
}

.small-col button {
    display: flex;
    align-items: center;
    gap: 4px;
    height: 23px;
    padding-left: 4px;
}

.small-col .arrow {
    margin-left: 4px;
}

.w39 .arrow {
    margin-left: 3px;
}

.small-col.two {
    justify-content: center;
}

.small-col.two button {
    height: 31px;
}

.sep {
    width: 1px;
    height: 70px;
    margin: 0 4px;
    background-color: #bebebe;
}

.collapse {
    display: flex;
    flex: 1;
    align-items: flex-end;
    justify-content: center;
    padding-bottom: 6px;
}

.collapse svg {
    width: 10px;
    height: 10px;
    color: #555;
    transform: rotate(180deg);
}

/* design explorer */
.workspace {
    display: flex;
    flex: 1;
    min-height: 0;
}

.explorer {
    width: 249px;
    margin-right: 11px;
    background-color: #e8e8e8;
    border-left: 1px solid #a0a0a0;
    border-right: 1px solid #a0a0a0;
}

.explorer h2 {
    height: 23px;
    font-size: 10px;
    line-height: 23px;
    font-weight: normal;
    text-align: center;
    color: #fff;
    background-color: #464646;
}

.explorer-tools {
    display: flex;
    justify-content: space-between;
    align-items: center;
    height: 30px;
    padding: 0 6px 1px 4px;
    background-color: #c8c8c8;
    border-bottom: 1px solid #a0a0a0;
}

.explorer-tools svg {
    width: 24px;
    height: 24px;
}

.explorer-tools button:nth-child(3) svg {
    padding: 1px;
}

.tree {
    padding-left: 1px;
    color: #333;
}

.tree,
.tree ul {
    list-style: none;
}

.tree ul {
    padding-left: 18px;
}

.tree li {
    position: relative;
}

.tree ul > li::before {
    content: "";
    position: absolute;
    top: 0;
    bottom: 0;
    left: 9px;
    border-left: 1px solid #222;
}

.tree ul > li:last-child::before {
    bottom: auto;
    height: 11px;
}

.row {
    display: flex;
    position: relative;
    align-items: center;
    gap: 2px;
    height: 20px;
}

.toggle {
    width: 17px;
    height: 12px;
    background-color: #e8e8e8;
}

.toggle svg {
    width: 17px;
    height: 12px;
}

.stub {
    width: 8px;
    height: 1px;
    margin-left: 9px;
    background-color: #222;
}

.row span {
    margin-left: 2px;
}

.eye {
    color: #0090ff;
}

.hidden {
    color: #b0b0b0;
}

.hidden .eye {
    color: #888;
}

.edge {
    color: #c83a44;
}

.row .rollback {
    width: 100px;
    height: 14px;
}

/* model view */
.viewport {
    position: relative;
    flex: 1;
    min-width: 0;
    background: linear-gradient(#a6d2ff, #e4effe);
    border-top: 1px solid #a6d2ff;
}

.scene {
    width: 100%;
    height: 100%;
}

.axis-names {
    font-family: "Liberation Sans", sans-serif;
    font-size: 9px;
}

.view-cube {
    position: absolute;
    top: 7px;
    right: 40px;
    width: 76px;
    height: 88px;
    font-size: 8px;
    font-weight: bold;
}

.view-cube text {
    fill: #75858c;
}

/* status bar */
.status-bar {
    display: flex;
    gap: 3px;
    height: 13px;
    line-height: 12px;
    color: #000;
}

.message {
    flex: 1;
    padding-left: 5px;
    border-top: 1px solid #a0a0a0;
    border-right: 1px solid #a0a0a0;
}

.pane {
    width: 272px;
    border-top: 1px solid #a0a0a0;
    border-left: 1px solid #a0a0a0;
}
```
